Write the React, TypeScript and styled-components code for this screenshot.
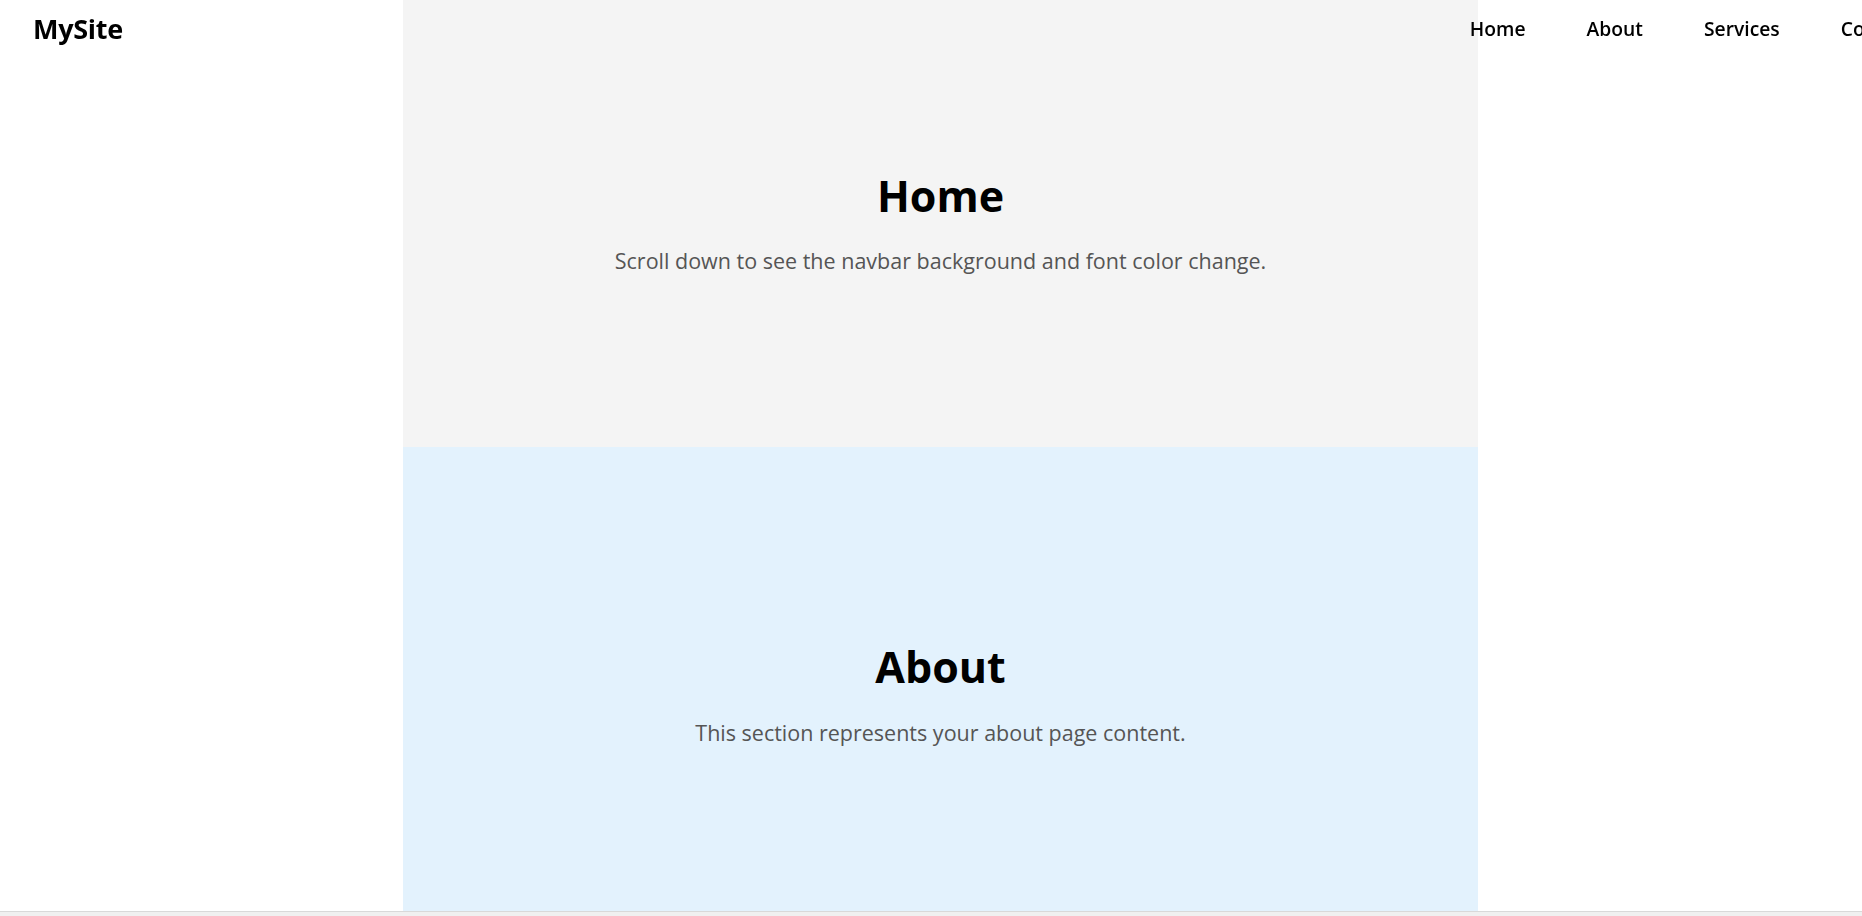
import React from "react";
import styled, { createGlobalStyle } from "styled-components";

const GlobalStyle = createGlobalStyle`
  html, body {
    margin: 0;
    padding: 0;
    overflow: hidden;
    background: #ffffff;
    font-family: "Open Sans", "Noto Sans", Arial, sans-serif;
  }
  * { box-sizing: border-box; }
`;

const Frame = styled.div`
  height: 916px;
  display: flex;
  flex-direction: column;
  overflow: hidden;
  background: #ffffff;
`;

const Viewport = styled.div`
  flex: 0 0 911px;
  overflow: hidden;
  position: relative;
  border-bottom-left-radius: 6px;
`;

const FrameEdge = styled.div`
  flex: 1;
  border-top: 1px solid #d9d9d9;
  background: #f0f0f0;
`;

/* The bar is wider than the window, so its last link runs past the right edge */
const Navbar = styled.nav`
  position: fixed;
  top: 0;
  left: 0;
  z-index: 10;
  width: 1946px;
  height: 56px;
  padding: 0 33px;
  display: flex;
  align-items: center;
  justify-content: space-between;
  background: transparent;
`;

const Logo = styled.div`
  font-size: 27px;
  font-weight: 700;
  color: #000;
  letter-spacing: -0.3px;
  padding-top: 1px;
`;

const Links = styled.ul`
  list-style: none;
  margin: 0;
  padding: 0;
  display: flex;
  gap: 61px;
  white-space: nowrap;
`;

const LinkItem = styled.li`
  font-size: 19.3px;
  font-weight: 600;
  color: #000;
`;

const Main = styled.main`
  display: flex;
  flex-direction: column;
  width: 1075px;
  margin-left: 403px;
`;

const Section = styled.section<{ $bg: string; $height: number }>`
  height: ${(p) => p.$height}px;
  background: ${(p) => p.$bg};
  display: flex;
  flex-direction: column;
  align-items: center;
  justify-content: center;
  text-align: center;
`;

const Title = styled.h1`
  margin: 0;
  font-size: 43px;
  font-weight: 700;
  color: #000;
  line-height: 1.2;
`;

const Text = styled.p`
  margin: 24px 0 0;
  font-size: 21.5px;
  color: #555;
  line-height: 1.5;
`;

const sections = [
  {
    id: "home",
    title: "Home",
    text: "Scroll down to see the navbar background and font color change.",
    bg: "#f4f4f4",
    height: 447,
  },
  {
    id: "about",
    title: "About",
    text: "This section represents your about page content.",
    bg: "#e3f2fd",
    height: 496,
  },
];

export default function App() {
  return (
    <Frame>
      <GlobalStyle />
      <Viewport>
        <Navbar>
          <Logo>MySite</Logo>
          <Links>
            <LinkItem>Home</LinkItem>
            <LinkItem>About</LinkItem>
            <LinkItem>Services</LinkItem>
            <LinkItem>Contact</LinkItem>
          </Links>
        </Navbar>
        <Main>
          {sections.map((s) => (
            <Section key={s.id} $bg={s.bg} $height={s.height}>
              <Title>{s.title}</Title>
              <Text>{s.text}</Text>
            </Section>
          ))}
        </Main>
      </Viewport>
      <FrameEdge />
    </Frame>
  );
}
